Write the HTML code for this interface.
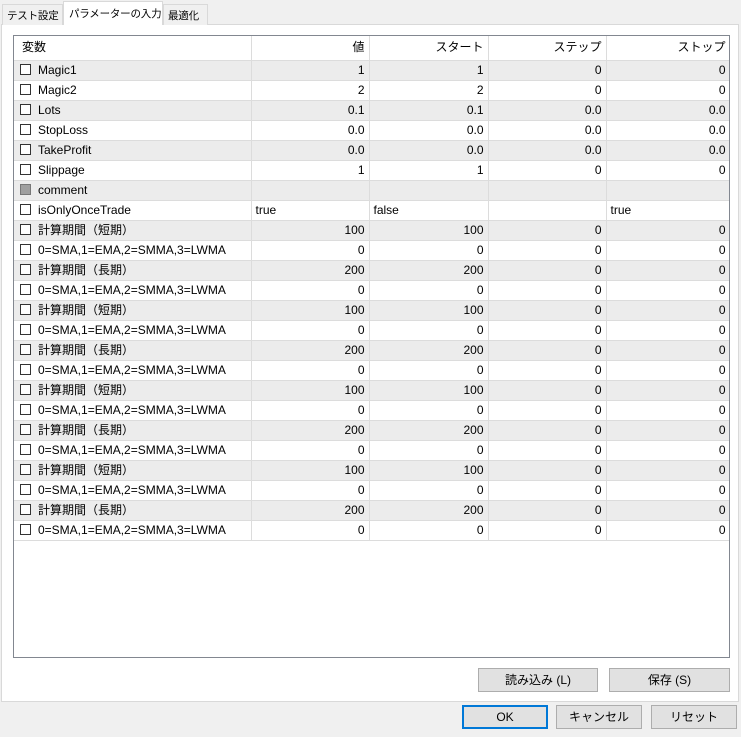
<!DOCTYPE html>
<html><head><meta charset="utf-8"><style>
*{box-sizing:border-box;margin:0;padding:0}
body{width:741px;height:737px;background:#f0f0f0;font-family:"Liberation Sans","Noto Sans CJK JP",sans-serif;font-size:12px;color:#000;position:relative;overflow:hidden}
.tab{position:absolute;top:4px;height:21px;border:1px solid #d9d9d9;border-bottom:none;background:#f0f0f0;padding:3px 0 0 4px;font-size:10.5px;white-space:nowrap;overflow:hidden;letter-spacing:-0.2px}
.tab.sel{top:1px;height:24px;background:#fff;border-color:#d9d9d9;z-index:2;padding-top:4px;padding-left:5px}
.panel{position:absolute;left:1px;top:24px;width:738px;height:678px;background:#fff;border:1px solid #d9d9d9}
.grid{position:absolute;left:13px;top:35px;width:717px;height:623px;border:1px solid #828790;background:#fff;overflow:hidden}
table{border-collapse:collapse;table-layout:fixed;width:716px}
td{height:20px;border-right:1px solid #dcdcdc;border-bottom:1px solid #dcdcdc;padding:0 4px;white-space:nowrap;overflow:hidden;line-height:19px}
tr.h td{height:24px;background:#fff;padding-left:8px;text-align:right;padding-right:4px}
tr.h td:first-child{text-align:left}
tr:nth-child(even) td{background:#ececec}
td.n{text-align:right}
.cb{display:inline-block;width:11px;height:11px;border:1px solid #333;background:#fff;vertical-align:-1px;margin:0 7px 0 2px}
.cb.g{background:#a0a0a0;border-color:#777}
.btn{position:absolute;height:24px;background:#e1e1e1;border:1px solid #adadad;text-align:center;line-height:22px;font-size:12px}
.btn.ok{border:2px solid #0078d7;line-height:20px}
</style></head><body>
<div class="panel"></div>
<div class="tab" style="left:2px;width:61px">テスト設定</div>
<div class="tab sel" style="left:63px;width:100px">パラメーターの入力</div>
<div class="tab" style="left:163px;width:45px">最適化</div>
<div class="grid"><table>
<colgroup><col style="width:237px"><col style="width:118px"><col style="width:119px"><col style="width:118px"><col style="width:124px"></colgroup>
<tr class="h"><td>変数</td><td>値</td><td>スタート</td><td>ステップ</td><td>ストップ</td></tr>
<tr><td><span class="cb"></span>Magic1</td><td class="n">1</td><td class="n">1</td><td class="n">0</td><td class="n">0</td></tr>
<tr><td><span class="cb"></span>Magic2</td><td class="n">2</td><td class="n">2</td><td class="n">0</td><td class="n">0</td></tr>
<tr><td><span class="cb"></span>Lots</td><td class="n">0.1</td><td class="n">0.1</td><td class="n">0.0</td><td class="n">0.0</td></tr>
<tr><td><span class="cb"></span>StopLoss</td><td class="n">0.0</td><td class="n">0.0</td><td class="n">0.0</td><td class="n">0.0</td></tr>
<tr><td><span class="cb"></span>TakeProfit</td><td class="n">0.0</td><td class="n">0.0</td><td class="n">0.0</td><td class="n">0.0</td></tr>
<tr><td><span class="cb"></span>Slippage</td><td class="n">1</td><td class="n">1</td><td class="n">0</td><td class="n">0</td></tr>
<tr><td><span class="cb g"></span>comment</td><td></td><td></td><td></td><td></td></tr>
<tr><td><span class="cb"></span>isOnlyOnceTrade</td><td>true</td><td>false</td><td></td><td>true</td></tr>
<tr><td><span class="cb"></span>計算期間（短期）</td><td class="n">100</td><td class="n">100</td><td class="n">0</td><td class="n">0</td></tr>
<tr><td><span class="cb"></span>0=SMA,1=EMA,2=SMMA,3=LWMA</td><td class="n">0</td><td class="n">0</td><td class="n">0</td><td class="n">0</td></tr>
<tr><td><span class="cb"></span>計算期間（長期）</td><td class="n">200</td><td class="n">200</td><td class="n">0</td><td class="n">0</td></tr>
<tr><td><span class="cb"></span>0=SMA,1=EMA,2=SMMA,3=LWMA</td><td class="n">0</td><td class="n">0</td><td class="n">0</td><td class="n">0</td></tr>
<tr><td><span class="cb"></span>計算期間（短期）</td><td class="n">100</td><td class="n">100</td><td class="n">0</td><td class="n">0</td></tr>
<tr><td><span class="cb"></span>0=SMA,1=EMA,2=SMMA,3=LWMA</td><td class="n">0</td><td class="n">0</td><td class="n">0</td><td class="n">0</td></tr>
<tr><td><span class="cb"></span>計算期間（長期）</td><td class="n">200</td><td class="n">200</td><td class="n">0</td><td class="n">0</td></tr>
<tr><td><span class="cb"></span>0=SMA,1=EMA,2=SMMA,3=LWMA</td><td class="n">0</td><td class="n">0</td><td class="n">0</td><td class="n">0</td></tr>
<tr><td><span class="cb"></span>計算期間（短期）</td><td class="n">100</td><td class="n">100</td><td class="n">0</td><td class="n">0</td></tr>
<tr><td><span class="cb"></span>0=SMA,1=EMA,2=SMMA,3=LWMA</td><td class="n">0</td><td class="n">0</td><td class="n">0</td><td class="n">0</td></tr>
<tr><td><span class="cb"></span>計算期間（長期）</td><td class="n">200</td><td class="n">200</td><td class="n">0</td><td class="n">0</td></tr>
<tr><td><span class="cb"></span>0=SMA,1=EMA,2=SMMA,3=LWMA</td><td class="n">0</td><td class="n">0</td><td class="n">0</td><td class="n">0</td></tr>
<tr><td><span class="cb"></span>計算期間（短期）</td><td class="n">100</td><td class="n">100</td><td class="n">0</td><td class="n">0</td></tr>
<tr><td><span class="cb"></span>0=SMA,1=EMA,2=SMMA,3=LWMA</td><td class="n">0</td><td class="n">0</td><td class="n">0</td><td class="n">0</td></tr>
<tr><td><span class="cb"></span>計算期間（長期）</td><td class="n">200</td><td class="n">200</td><td class="n">0</td><td class="n">0</td></tr>
<tr><td><span class="cb"></span>0=SMA,1=EMA,2=SMMA,3=LWMA</td><td class="n">0</td><td class="n">0</td><td class="n">0</td><td class="n">0</td></tr>
</table></div>
<div class="btn" style="left:478px;top:668px;width:120px">読み込み (L)</div>
<div class="btn" style="left:609px;top:668px;width:121px">保存 (S)</div>
<div class="btn ok" style="left:462px;top:705px;width:86px">OK</div>
<div class="btn" style="left:556px;top:705px;width:86px">キャンセル</div>
<div class="btn" style="left:651px;top:705px;width:86px">リセット</div>
</body></html>
